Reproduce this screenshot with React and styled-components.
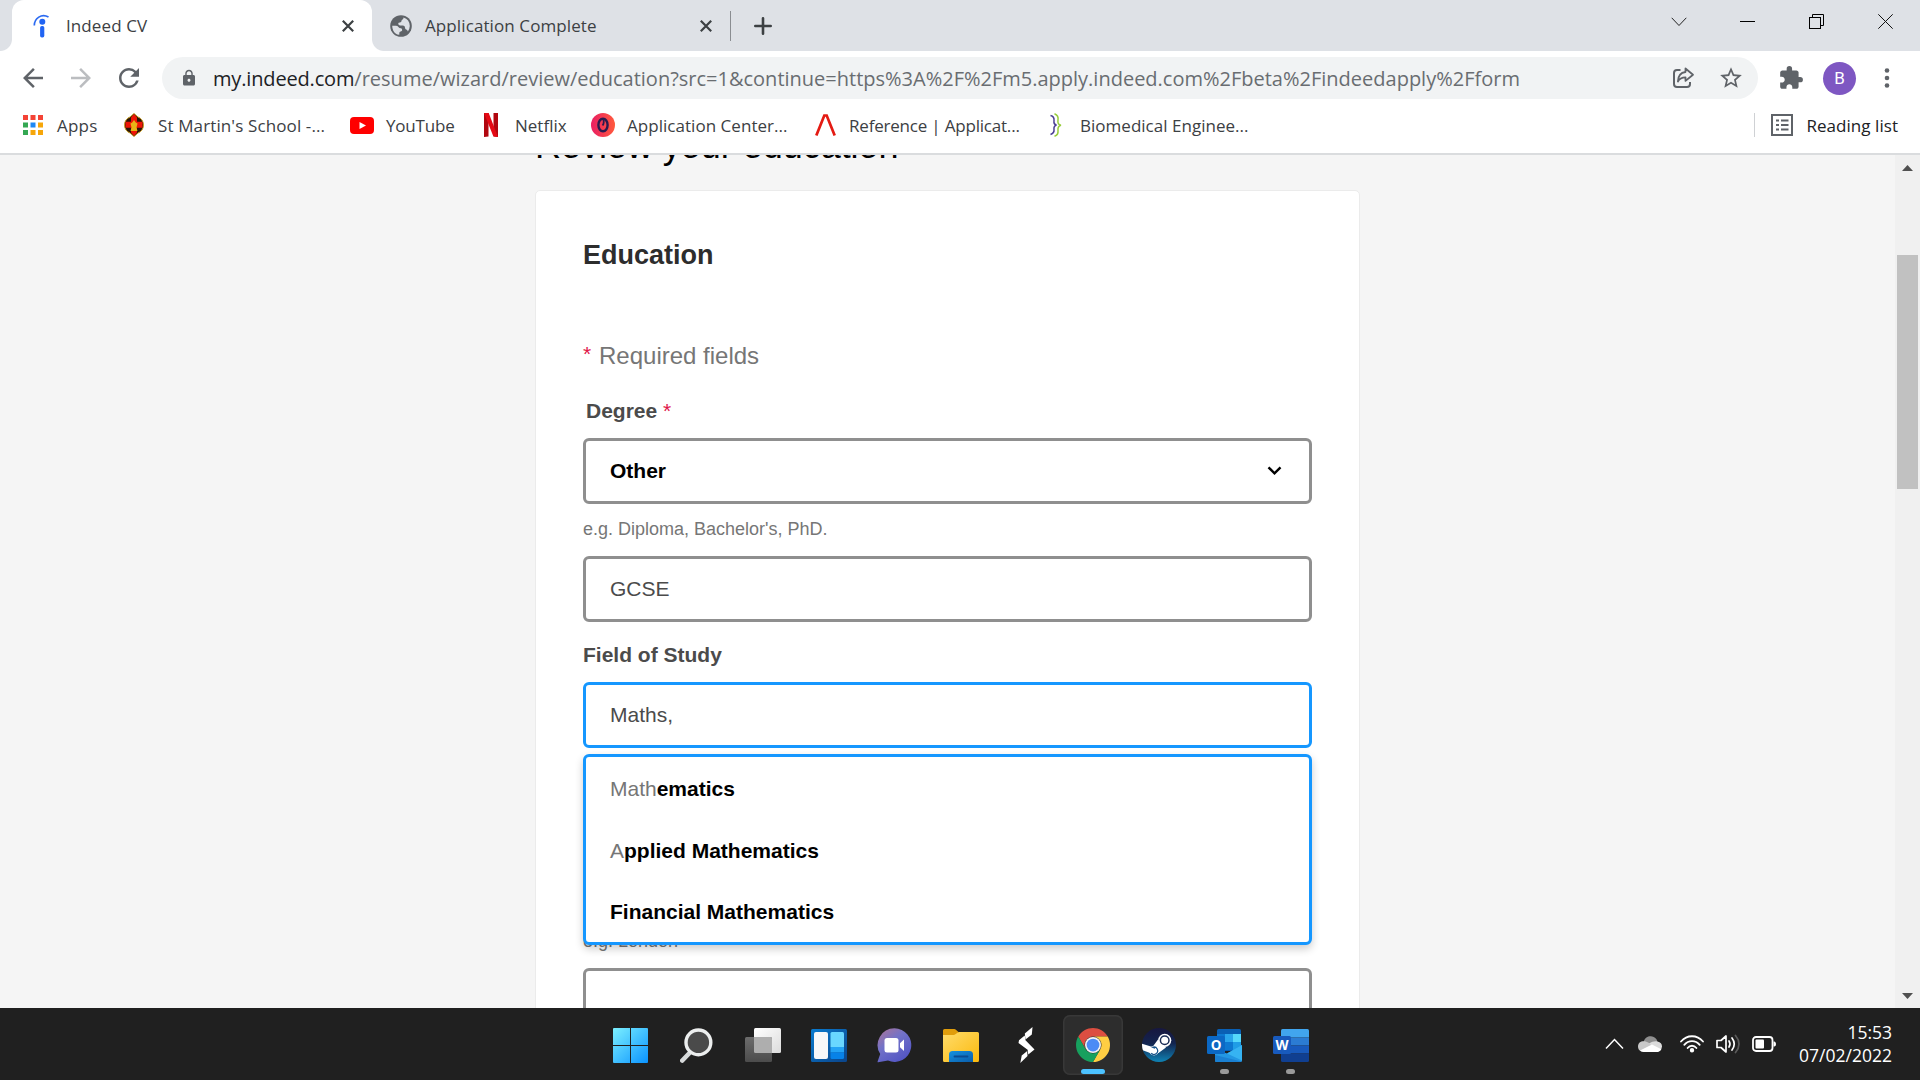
import React from "react";
import styled, { createGlobalStyle, css } from "styled-components";
import { MdArrowBack, MdArrowForward, MdExtension, MdLock, MdRefresh, MdStarBorder } from "react-icons/md";

const GlobalStyle = createGlobalStyle`
  * { box-sizing: border-box; }
  html, body { margin: 0; padding: 0; overflow: hidden; }
  svg { display: block; flex: none; }
`;

const uiFont = css`
  font-family: "Open Sans", "Noto Sans", sans-serif;
`;

const Screen = styled.div`
  display: flex;
  flex-direction: column;
  width: 1920px;
  height: 1080px;
  overflow: hidden;
  background: #fff;
`;

/* ---------- browser chrome ---------- */

const TabStrip = styled.div`
  ${uiFont}
  display: flex;
  height: 51px;
  padding-left: 12px;
  background: #dee1e6;
  color: #3c4043;
  font-size: 17px;
  flex: none;
`;

const Tab = styled.div`
  position: relative;
  display: flex;
  align-items: center;
  width: ${(p) => p.$width}px;
  padding-left: ${(p) => p.$pad}px;
  border-radius: 12px 12px 0 0;
  background: ${(p) => (p.$active ? "#fff" : "transparent")};
  ${(p) =>
    p.$active &&
    css`
      &::before,
      &::after {
        content: "";
        position: absolute;
        bottom: 0;
        width: 12px;
        height: 12px;
      }
      &::before {
        left: -12px;
        background: radial-gradient(circle at 0 0, transparent 11.5px, #fff 12.5px);
      }
      &::after {
        right: -12px;
        background: radial-gradient(circle at 100% 0, transparent 11.5px, #fff 12.5px);
      }
    `}
`;

const TabTitle = styled.span`
  flex: 1;
  margin-left: ${(p) => p.$gap}px;
  letter-spacing: 0.1px;
  white-space: nowrap;
`;

const TabClose = styled.span`
  display: flex;
  margin-right: 18px;
`;

const Divider = styled.div`
  align-self: ${(p) => (p.$top ? "flex-start" : "center")};
  width: 1px;
  height: ${(p) => p.$height}px;
  margin-top: ${(p) => p.$top || 0}px;
  background: ${(p) => p.$color};
`;

const NewTab = styled.div`
  display: flex;
  align-items: center;
  margin-left: 23px;
`;

const WindowButtons = styled.div`
  display: flex;
  height: 43px;
  margin-left: auto;
`;

const WindowButton = styled.div`
  display: flex;
  align-items: center;
  justify-content: center;
  width: 69px;
`;

const Toolbar = styled.div`
  display: flex;
  align-items: center;
  height: 54px;
  padding-left: 9px;
  flex: none;
`;

const NavButton = styled.div`
  display: flex;
  align-items: center;
  justify-content: center;
  width: 48px;
  color: ${(p) => (p.$muted ? "#bbbdc0" : "#5f6368")};
`;

const Omnibox = styled.div`
  ${uiFont}
  display: flex;
  align-items: center;
  width: 1596px;
  height: 42px;
  margin-left: 9px;
  padding: 0 12px 0 18px;
  border-radius: 21px;
  background: #f1f3f4;
  color: #5f6368;
`;

const Url = styled.span`
  flex: 1;
  margin-left: 15px;
  color: #696d71;
  font-size: 20px;
  white-space: nowrap;
`;

const UrlHost = styled.span`
  color: #202124;
  letter-spacing: -0.16px;
`;

const OmniAction = styled.span`
  display: flex;
  justify-content: center;
  width: 30px;
  margin-left: ${(p) => p.$gap || 0}px;
`;

const ToolbarActions = styled.div`
  display: flex;
  align-items: center;
  color: #5f6368;
  margin-left: 20px;
`;

const Avatar = styled.div`
  display: flex;
  align-items: center;
  justify-content: center;
  width: 33px;
  height: 33px;
  margin: 0 20px 0 19px;
  border-radius: 50%;
  background: #7e57c2;
  color: #fff;
  font: 17px "Roboto", sans-serif;
`;

const BookmarkBar = styled.div`
  ${uiFont}
  display: flex;
  align-items: center;
  height: 50px;
  padding: 0 22px 8px 21px;
  border-bottom: 2px solid #dadcde;
  color: #3c4043;
  font-size: 17px;
  flex: none;
`;

const Bookmark = styled.div`
  display: flex;
  align-items: center;
  width: ${(p) => p.$width}px;
  letter-spacing: ${(p) => p.$track}px;
  white-space: nowrap;
`;

const BookmarkIcon = styled.span`
  display: flex;
  justify-content: center;
  width: 24px;
  margin-right: 12px;
`;

const ReadingList = styled.div`
  display: flex;
  align-items: center;
  gap: 13px;
  margin-left: 16px;
  color: #202124;
  letter-spacing: 0.05px;
`;

const Spacer = styled.div`
  flex: 1;
`;

/* ---------- page ---------- */

const Viewport = styled.div`
  display: flex;
  height: 853px;
  background: #f5f5f5;
  font-family: "Liberation Sans", Arial, sans-serif;
  overflow: hidden;
  flex: none;
`;

const Page = styled.main`
  flex: 1;
  padding-left: 535px;
  overflow: hidden;
`;

const PageTitle = styled.h1`
  margin: -31px 0 22px;
  color: #000;
  font-size: 36px;
  font-weight: 400;
  letter-spacing: -0.03px;
  line-height: 44px;
`;

const Card = styled.section`
  display: flex;
  flex-direction: column;
  width: 825px;
  height: 900px;
  padding: 44px 47px 0 47px;
  border: 1px solid #ebebeb;
  border-radius: 5px;
  background: #fff;
`;

const CardTitle = styled.h2`
  margin: 0 0 63px;
  color: #2d2d2d;
  font-size: 27px;
  line-height: 40px;
`;

const Note = styled.p`
  display: flex;
  gap: 7px;
  margin: 0 0 22px;
  color: #767676;
  font-size: 24px;
  line-height: 36px;
`;

const NoteMark = styled.span`
  width: 9px;
  color: #e0164a;
  font-size: 21px;
  line-height: 32px;
`;

const Required = styled.span`
  color: #e0164a;
  font-weight: 400;
`;

const Label = styled.label`
  margin: ${(p) => p.$top || 0}px 0 12px ${(p) => p.$indent || 0}px;
  color: #4b4b4b;
  font-size: 21px;
  font-weight: 700;
  line-height: 30px;
`;

const Hint = styled.p`
  margin: ${(p) => p.$top}px 0 13px;
  color: #767676;
  font-size: 18px;
  line-height: 27px;
`;

const Control = styled.div`
  position: relative;
  display: flex;
  align-items: center;
  justify-content: space-between;
  height: 66px;
  padding: 0 27px 0 24px;
  border: 3px solid ${(p) => (p.$focus ? "#1597ff" : "#8f8f8f")};
  border-radius: 6px;
  background: #fff;
  color: ${(p) => (p.$strong ? "#000" : "#4b4b4b")};
  font-size: 21px;
  font-weight: ${(p) => (p.$strong ? 700 : 400)};
  flex: none;
`;

const Suggestions = styled.ul`
  position: absolute;
  top: 69px;
  left: -3px;
  right: -3px;
  height: 191px;
  margin: 0;
  padding: 1px 0 0;
  border: 3px solid #1597ff;
  border-radius: 6px;
  background: #fff;
  box-shadow: 0 4px 8px rgba(0, 0, 0, 0.2);
  list-style: none;
`;

const Suggestion = styled.li`
  display: flex;
  align-items: center;
  height: 61.5px;
  padding-left: 24px;
  color: #767676;

  &:nth-child(2) {
    padding-top: 1px;
  }
`;

const Rest = styled.b`
  color: #000;
`;

const Scrollbar = styled.div`
  display: flex;
  flex-direction: column;
  align-items: center;
  justify-content: space-between;
  width: 25px;
  padding: 10px 0 9px;
  background: #f0f0f0;
`;

const Thumb = styled.div`
  width: 21px;
  height: 234px;
  margin: 84px 0 auto;
  background: #c1c1c1;
`;

/* ---------- taskbar ---------- */

const Taskbar = styled.footer`
  display: flex;
  height: 72px;
  padding: 0 28px 0 597.500px;
  background: #202020;
  color: #fff;
  flex: none;
`;

const TaskItem = styled.div`
  position: relative;
  display: flex;
  align-items: center;
  justify-content: center;
  width: 60px;
  height: 60px;
  margin: 7px 3px 0;
  border-radius: 7px;
  ${(p) => p.$active && css`
    background: #2d2d2d;
    box-shadow: inset 0 0 0 1.5px #383838;
  `}
  ${(p) => p.$running && css`
    &::after {
      content: "";
      position: absolute;
      bottom: 1px;
      width: ${p.$active ? 24 : 9}px;
      height: 5px;
      border-radius: 3px;
      background: ${p.$active ? "#4cc2ff" : "#9a9a9a"};
    }
  `}
`;

const Tray = styled.div`
  display: flex;
  align-items: center;
  height: 72px;
  margin-left: auto;
`;

const TrayIcon = styled.div`
  margin-right: ${(p) => p.$gap}px;
`;

const Clock = styled.div`
  ${uiFont}
  width: 95px;
  font-size: 17.5px;
  line-height: 23px;
  text-align: right;
  white-space: nowrap;
`;

/* ---------- icons ---------- */

const Cross = () => (
  <svg width="12" height="12" viewBox="0 0 12 12" stroke="#3c4043" strokeWidth="2.2" fill="none">
    <path d="M.8.8l10.400 10.400M11.200.8L.8 11.200" />
  </svg>
);

const IndeedIcon = () => (
  <svg width="17" height="24" viewBox="0 0 17 24">
    <path d="M1.300 11.500C1.300 4.500 8.500-1 15.500 3" fill="none" stroke="#2c6bf2" strokeWidth="1.700" />
    <circle cx="9.300" cy="7.700" r="3" fill="#2164f3" />
    <rect x="7.100" y="12" width="4.200" height="11.500" rx="1.700" fill="#2164f3" />
  </svg>
);

const GlobeIcon = () => (
  <svg width="22" height="22" viewBox="0 0 22 22">
    <circle cx="11" cy="11" r="10.800" fill="#5f6368" />
    <path d="M2.200 10.800h3.600q1.800 0 2.600 1.300.8 1.200 2.400 1.200 1.400.2 1.400 1.700 0 1.400-1.600 1.600-1.300.2-1.300 1.500v1.700Q5 19.400 3.200 15.500 2.200 13.500 2.200 10.800z" fill="#dee1e6" />
    <path d="M13.500 2.600q6 1.900 6.300 8.400-.2 3.300-1.900 5.400-.6-1.600-1.800-1.900-1-.3-1-1.600 0-2.300-2-2.500H9.900q-1.700-.2-1.700-1.600T9.900 7.400q1.600-.1 1.600-1.500 0-1.100 1.100-1.400 1-.4.900-1.900z" fill="#dee1e6" />
  </svg>
);

const ShareIcon = () => (
  <svg width="23" height="22" viewBox="0 0 23 22" fill="none" stroke="#5f6368" strokeWidth="2" strokeLinejoin="round">
    <path d="M8.500 3H5Q2 3 2 6v11q0 3 3 3h10q3 0 3-3v-2" />
    <path d="M13.500 1.500l7.500 6.200-7.500 6.200v-3.600c-3.500 0-6 1-7.600 4.200.2-5.500 3-8.900 7.600-9.500z" strokeWidth="1.800" />
  </svg>
);

const AppsIcon = () => {
  const colors = ["#f44336", "#f44336", "#f44336", "#34a853", "#1e88f5", "#f6a60a", "#34a853", "#f6a60a", "#f6a60a"];
  return (
    <svg width="20" height="20" viewBox="0 0 20 20">
      {colors.map((c, i) => (
        <rect key={i} x={(i % 3) * 7.500} y={Math.floor(i / 3) * 7.500} width="5" height="5" fill={c} />
      ))}
    </svg>
  );
};

const CrestIcon = () => (
  <svg width="20" height="24" viewBox="0 0 20 24">
    <path d="M10 .5l4 3.500c3 1 5.500 4 5.500 8s-2.500 7-5.500 8l-4 3.500L6 20c-3-1-5.500-4-5.500-8S3 5 6 4z" fill="#2b1608" stroke="#c9a227" />
    <path d="M7 4.500L10 1l3 3.500v4.300h5.500v6H13v4.700L10 23l-3-3.500v-4.700H1.500v-6H7z" fill="#ee1506" />
    <path d="M10 7l1.800 2.500 1.700 1-1 4L13.500 18h-7l1-3.500-1-4 1.700-1z" fill="#e7b416" />
  </svg>
);

const YouTubeIcon = () => (
  <svg width="24" height="17" viewBox="0 0 24 17">
    <rect width="24" height="17" rx="4" fill="#f00" />
    <path d="M9.500 5l6.500 3.500-6.500 3.500z" fill="#fff" />
  </svg>
);

const NetflixIcon = () => (
  <svg width="14" height="24" viewBox="0 0 14 24">
    <path d="M0 0h4.500v23.400L0 24zM9.500 0H14v24l-4.500-.6z" fill="#b1060f" />
    <path d="M0 0h4.700L14 24l-4.700-.7z" fill="#e50914" />
  </svg>
);

const OperaIcon = () => (
  <svg width="24" height="24" viewBox="0 0 24 24">
    <defs>
      <linearGradient id="badge"><stop stopColor="#e91e63" /><stop offset="1" stopColor="#ff5a3c" /></linearGradient>
    </defs>
    <circle cx="12" cy="12" r="12" fill="url(#badge)" />
    <ellipse cx="12" cy="12" rx="4.600" ry="6.300" fill="none" stroke="#2b1a4f" strokeWidth="2.400" />
    <path d="M12 5.500q1.800 4-.4 7" fill="none" stroke="#2b1a4f" strokeWidth="1.800" />
  </svg>
);

const CaretIcon = () => (
  <svg width="21" height="22" viewBox="0 0 21 22">
    <path d="M1.300 21.500L9.300 1.500h2.400l8 20" fill="none" stroke="#e41b13" strokeWidth="2.700" />
  </svg>
);

const BraceIcon = () => (
  <svg width="12" height="24" viewBox="0 0 12 24" fill="none" strokeWidth="1.500">
    <path d="M.5 2.500Q4.500 3.500 4 7.500T6.500 12Q3.500 13 4 16.500T.5 21.500" stroke="#4b3f94" />
    <path d="M4.500.8Q8.800 2.500 8 7t3 5.200Q7.500 13 8 17.500T4.500 23.200" stroke="#97cc3a" />
  </svg>
);

const ListIcon = () => (
  <svg width="22" height="22" viewBox="0 0 22 22" stroke="#5f6368" fill="none" strokeWidth="2">
    <rect x="1" y="1" width="20" height="20" />
    <path d="M5 6.500h3M5 11h3M5 15.500h3M10 6.500h7.500M10 11h7.500M10 15.500h7.500" />
  </svg>
);

const StartIcon = () => (
  <svg width="35" height="35" viewBox="0 0 35 35">
    <defs>
      <linearGradient id="start" gradientUnits="userSpaceOnUse" x1="0" y1="0" x2="35" y2="35">
        <stop stopColor="#7cf0ff" /><stop offset="1" stopColor="#0a93ff" />
      </linearGradient>
    </defs>
    <path d="M1 0h16v17H0V1q0-1 1-1zM18 0h16q1 0 1 1v16H18zM0 18h17v17H1q-1 0-1-1zM18 18h17v16q0 1-1 1H18z" fill="url(#start)" />
  </svg>
);

const SearchIcon = () => (
  <svg width="33" height="35" viewBox="0 0 33 35">
    <path d="M10 24.500L2.300 32.500" stroke="#d7dadb" strokeWidth="4.600" strokeLinecap="round" />
    <circle cx="18.400" cy="14.400" r="12.400" fill="#4a4a4a" stroke="#eceeee" strokeWidth="3.400" />
  </svg>
);

const TaskViewIcon = () => (
  <svg width="36" height="34" viewBox="0 0 36 34">
    <defs>
      <linearGradient id="pane" x2="1" y2="1"><stop stopColor="#fff" /><stop offset="1" stopColor="#dcdcdc" /></linearGradient>
      <linearGradient id="shade" x2="0" y2="1"><stop stopColor="#6c6c6c" /><stop offset="1" stopColor="#4c4c4c" /></linearGradient>
    </defs>
    <rect x="9" width="27" height="25" rx="1.500" fill="url(#pane)" />
    <rect y="9" width="27" height="25" rx="1.500" fill="url(#shade)" />
    <path d="M9 9h16.500q1.500 0 1.500 1.500V25H10.500Q9 25 9 23.500z" fill="#aeaeae" />
  </svg>
);

const WidgetsIcon = () => (
  <svg width="36" height="33" viewBox="0 0 36 33">
    <defs>
      <linearGradient id="frame" x2="1" y2="1"><stop stopColor="#0a7bd0" /><stop offset="1" stopColor="#0b4489" /></linearGradient>
    </defs>
    <rect width="36" height="33" rx="1.500" fill="url(#frame)" />
    <rect x="3" y="3" width="14" height="27" rx="2" fill="#f7f7f9" />
    <path d="M19.500 4.500Q19.500 3 21 3h10.500Q33 3 33 4.500V18H19.500z" fill="#69d7ff" />
    <path d="M19.500 18H33v5.500H19.500z" fill="#23a3f5" />
    <path d="M19.500 23.500H33v5q0 1.500-1.500 1.500H21q-1.500 0-1.500-1.500z" fill="#0782e8" />
  </svg>
);

const ChatIcon = () => (
  <svg width="35" height="35" viewBox="0 0 35 35">
    <defs>
      <linearGradient id="chat" x1=".1" x2=".8" y2="1"><stop stopColor="#a9739a" /><stop offset=".4" stopColor="#7272c8" /><stop offset="1" stopColor="#4f52c4" /></linearGradient>
    </defs>
    <path d="M17.500.3a16.800 16.800 0 1 1-6.500 32.300L1.200 34.300Q.3 34.300.6 33.400L3.200 26A16.800 16.800 0 0 1 17.500.3z" fill="url(#chat)" />
    <rect x="7.500" y="10" width="14" height="14.500" rx="2.500" fill="#fff" />
    <path d="M23 15.300l4-3.800v11.500l-4-3.800z" fill="#fff" />
  </svg>
);

const FolderIcon = () => (
  <svg width="36" height="33" viewBox="0 0 36 33">
    <defs>
      <linearGradient id="folder" x2="1" y2="1"><stop stopColor="#ffdc6b" /><stop offset="1" stopColor="#fbb90d" /></linearGradient>
      <linearGradient id="holder" x2="1" y2="1"><stop stopColor="#1592e0" /><stop offset="1" stopColor="#0a5dab" /></linearGradient>
    </defs>
    <path d="M0 1.500Q0 0 1.500 0h9.700q1 0 1.700.7L15.500 3v5H0z" fill="#e09d0c" />
    <path d="M0 6h10.500q1.200 0 2.200-.9l1.500-1.200q1-.9 2.200-.9H34.500Q36 3 36 4.500V31.500q0 1.500-1.500 1.500h-33Q0 33 0 31.500z" fill="url(#folder)" />
    <path d="M6 33v-7.500Q6 22 9.500 22h17q3.500 0 3.500 3.500V33z" fill="url(#holder)" />
    <path d="M11.500 27.500h13" stroke="#0b4b91" strokeWidth="1.800" strokeLinecap="round" />
  </svg>
);

const BoltIcon = () => (
  <svg width="17" height="36" viewBox="0 0 17 36" fill="#fff">
    <path d="M14.500 0L6.800 6.500l.7 6L13.800 7.500z" />
    <path d="M1 13.200L6.700 8.500l.8 4.700 9 9.300-6.200 5-.7-4.700L.5 16z" />
    <path d="M2.300 36L9.500 29l-.3-5L3.700 28.500z" />
  </svg>
);

const ChromeIcon = () => {
  const arm = "M24 12L44.780 12A24 24 0 0 0 3.220 12L13.610 30A12 12 0 0 1 24 12Z";
  return (
    <svg width="34" height="34" viewBox="0 0 48 48">
      <path d={arm} fill="#dc4e41" />
      <path d={arm} fill="#ffce43" transform="rotate(120 24 24)" />
      <path d={arm} fill="#17a05e" transform="rotate(240 24 24)" />
      <circle cx="24" cy="24" r="11.300" fill="#f3f3f3" />
      <circle cx="24" cy="24" r="9" fill="#4b8bf5" />
    </svg>
  );
};

const SteamIcon = () => (
  <svg width="34" height="34" viewBox="0 0 34 34">
    <defs>
      <linearGradient id="steam" x2="0" y2="1"><stop stopColor="#17173f" /><stop offset=".45" stopColor="#13244f" /><stop offset="1" stopColor="#0f83b5" /></linearGradient>
      <clipPath id="disc"><circle cx="17" cy="17" r="17" /></clipPath>
    </defs>
    <g clipPath="url(#disc)">
      <rect width="34" height="34" fill="url(#steam)" />
      <path d="M-1 15.500L10.500 19l5.500-7.500 8 8-7.500 5.500-7 .5L-1 21.500z" fill="#fff" />
      <circle cx="22.700" cy="12.300" r="6.600" fill="#fff" />
      <circle cx="22.700" cy="12.300" r="4.300" fill="#fff" stroke="#1a2c55" strokeWidth="1.500" />
      <circle cx="12" cy="22.700" r="4.800" fill="#fff" />
      <path d="M9.200 25.200a3.700 3.700 0 1 0 1.500-6l2.300 1" fill="none" stroke="#16538a" strokeWidth="1.200" />
    </g>
  </svg>
);

const AppBadge = styled.text`
  font: 700 ${(p) => p.$size}px "Open Sans", sans-serif;
  fill: #fff;
  text-anchor: middle;
`;

const OutlookIcon = () => (
  <svg width="35" height="33" viewBox="0 0 35 33">
    <path d="M10 1.500Q10 0 11.500 0h21Q34 0 34 1.500V22H10z" fill="#0a5fb4" />
    <path d="M10 5h8v8h-8zM18 13h8v8h-8z" fill="#0d78d1" />
    <path d="M18 5h8v8h-8z" fill="#2aa6ec" />
    <path d="M26 5h8v8h-8z" fill="#55d8fb" />
    <path d="M26 13h8v9h-8z" fill="#1f9de6" />
    <path d="M8 20l12 4.500L35 16v15.500q0 1.500-1.500 1.500h-24Q8 33 8 31.500z" fill="#2397e3" />
    <path d="M35 16v15.500L20 24.500z" fill="#36b3f2" />
    <path d="M8 26l26.500 6.500q-.5.500-1 .5h-24Q8 33 8 31.500z" fill="#1a80d2" />
    <rect y="7" width="18" height="18" rx="1.500" fill="#0b68c4" />
    <AppBadge x="9" y="20.800" $size={13.500}>O</AppBadge>
  </svg>
);

const WordIcon = () => (
  <svg width="36" height="33" viewBox="0 0 36 33">
    <path d="M8 1.500Q8 0 9.500 0h25Q36 0 36 1.500V8.500H8z" fill="#41a5ee" />
    <path d="M8 8.500h28v8H8z" fill="#2b7cd3" />
    <path d="M8 16.500h28v8H8z" fill="#185abd" />
    <path d="M8 24.500h28v7q0 1.500-1.500 1.500h-25Q8 33 8 31.500z" fill="#103f91" />
    <rect y="7" width="18" height="18" rx="1.500" fill="#185abd" />
    <AppBadge x="9" y="20.800" $size={13.500}>W</AppBadge>
  </svg>
);

const CloudIcon = () => (
  <svg width="24" height="16" viewBox="0 0 24 16">
    <path d="M5.500 6C7 1 10.500 0 13 .3c3 .3 5.500 2 6.500 5.200L12 11z" fill="#8f8f8f" />
    <path d="M0 10.500C0 7 2.500 5.300 5.500 5.300c2 0 3.500.5 5.500 1.700l4 2.500L3 15.300Q0 14 0 10.500z" fill="#c9c9c9" />
    <path d="M11 7.500c3-2 6-2.500 8.500-2 3 .7 4.500 2.500 4.500 5q0 3-2.500 4.500z" fill="#dcdcdc" />
    <path d="M2 14.500l12-6 9.300 4.700Q22 16 18.500 16h-13Q3.500 16 2 14.500z" fill="#fff" />
  </svg>
);

const WifiIcon = () => (
  <svg width="24" height="18" viewBox="0 0 24 18" fill="none" stroke="#fff" strokeWidth="1.800" strokeLinecap="round">
    <path d="M1 6.500C7-.5 17-.5 23 6.500M4.300 9.800c4.200-5 11.200-5 15.400 0M7.600 13c2.400-3 6.400-3 8.800 0" />
    <circle cx="12" cy="15.300" r="1.300" fill="#fff" />
  </svg>
);

const SpeakerIcon = () => (
  <svg width="25" height="20" viewBox="0 0 25 20" fill="none" stroke="#fff" strokeWidth="1.700" strokeLinejoin="round" strokeLinecap="round">
    <path d="M1 6.500h4L10 2v16l-5-4.500H1z" />
    <path d="M13 7q2 3 0 6M16 4q4.500 6 0 12" />
    <path d="M19.500 1.500q7 8.500 0 17" stroke="#5a5a5a" />
  </svg>
);

const BatteryIcon = () => (
  <svg width="24" height="16" viewBox="0 0 24 16">
    <rect x="1" y="1" width="19.500" height="14" rx="3" fill="none" stroke="#fff" strokeWidth="1.800" />
    <rect x="3.500" y="3.500" width="8.500" height="9" rx="1" fill="#fff" />
    <path d="M21.500 5.500h1Q24 6 24 8t-1.500 2.500h-1z" fill="#fff" />
  </svg>
);

const bookmarks = [
  { title: "Apps", icon: <AppsIcon />, width: 101, track: 0.2 },
  { title: "St Martin's School -...", icon: <CrestIcon />, width: 228, track: 0.12 },
  { title: "YouTube", icon: <YouTubeIcon />, width: 129, track: -0.2 },
  { title: "Netflix", icon: <NetflixIcon />, width: 112, track: 0 },
  { title: "Application Center...", icon: <OperaIcon />, width: 222, track: 0.04 },
  { title: "Reference | Applicat...", icon: <CaretIcon />, width: 231, track: -0.2 },
  { title: "Biomedical Enginee...", icon: <BraceIcon />, width: 210, track: 0.02 },
];

const suggestions = [
  { typed: "Math", rest: "ematics" },
  { typed: "A", rest: "pplied Mathematics" },
  { typed: "", rest: "Financial Mathematics" },
];

const tasks = [
  { id: "start", icon: <StartIcon /> },
  { id: "search", icon: <SearchIcon /> },
  { id: "views", icon: <TaskViewIcon /> },
  { id: "widgets", icon: <WidgetsIcon /> },
  { id: "chat", icon: <ChatIcon /> },
  { id: "files", icon: <FolderIcon /> },
  { id: "bolt", icon: <BoltIcon /> },
  { id: "chrome", icon: <ChromeIcon />, active: true, running: true },
  { id: "steam", icon: <SteamIcon /> },
  { id: "outlook", icon: <OutlookIcon />, running: true },
  { id: "word", icon: <WordIcon />, running: true },
];

export default function App() {
  return (
    <Screen>
      <GlobalStyle />
      <TabStrip>
        <Tab $active $width={360} $pad={21}>
          <IndeedIcon />
          <TabTitle $gap={16}>Indeed CV</TabTitle>
          <TabClose><Cross /></TabClose>
        </Tab>
        <Tab $width={358} $pad={18}>
          <GlobeIcon />
          <TabTitle $gap={13}>Application Complete</TabTitle>
          <TabClose><Cross /></TabClose>
        </Tab>
        <Divider $height={30} $top={11} $color="#8a8d91" />
        <NewTab>
          <svg width="18" height="18" viewBox="0 0 18 18" stroke="#3c4043" strokeWidth="2.6" strokeLinecap="round">
            <path d="M9 1.300v15.400M1.300 9h15.400" />
          </svg>
        </NewTab>
        <WindowButtons>
          <WindowButton>
            <svg width="16" height="10" viewBox="0 0 16 10" fill="none" stroke="#222"><path d="M.7.8L8 8.500 15.300.8" /></svg>
          </WindowButton>
          <WindowButton>
            <svg width="15" height="1" viewBox="0 0 15 1"><rect width="15" height="1" fill="#000" /></svg>
          </WindowButton>
          <WindowButton>
            <svg width="15" height="15" viewBox="0 0 15 15" fill="none" stroke="#000">
              <rect x=".5" y="3.500" width="11" height="11" /><path d="M3.500 3.500v-3h11v11h-3" />
            </svg>
          </WindowButton>
          <WindowButton>
            <svg width="15" height="15" viewBox="0 0 15 15" stroke="#111"><path d="M.3.3l14.400 14.400M14.700.3L.3 14.700" /></svg>
          </WindowButton>
        </WindowButtons>
      </TabStrip>

      <Toolbar>
        <NavButton><svg width="20" height="20" viewBox="4 4 16 16" fill="currentColor"><MdArrowBack size={24} /></svg></NavButton>
        <NavButton $muted><svg width="20" height="20" viewBox="4 4 16 16" fill="currentColor"><MdArrowForward size={24} /></svg></NavButton>
        <NavButton><MdRefresh size={30} /></NavButton>
        <Omnibox>
          <MdLock size={18} />
          <Url>
            <UrlHost>my.indeed.com</UrlHost>
            /resume/wizard/review/education?src=1&amp;continue=https%3A%2F%2Fm5.apply.indeed.com%2Fbeta%2Findeedapply%2Fform
          </Url>
          <OmniAction><ShareIcon /></OmniAction>
          <OmniAction $gap={18}><MdStarBorder size={26} /></OmniAction>
        </Omnibox>
        <ToolbarActions>
          <MdExtension size={26} />
          <Avatar>B</Avatar>
          <svg width="22" height="20" viewBox="0 0 22 20" fill="#5f6368">
            <circle cx="11" cy="2.500" r="2.300" /><circle cx="11" cy="10" r="2.300" /><circle cx="11" cy="17.500" r="2.300" />
          </svg>
        </ToolbarActions>
      </Toolbar>

      <BookmarkBar>
        {bookmarks.map((b) => (
          <Bookmark key={b.title} $width={b.width} $track={b.track}>
            <BookmarkIcon>{b.icon}</BookmarkIcon>
            {b.title}
          </Bookmark>
        ))}
        <Spacer />
        <Divider $height={24} $color="#cfd1d4" />
        <ReadingList>
          <ListIcon />
          Reading list
        </ReadingList>
      </BookmarkBar>

      <Viewport>
        <Page>
          <PageTitle>Review your education</PageTitle>
          <Card>
            <CardTitle>Education</CardTitle>
            <Note><NoteMark>*</NoteMark>Required fields</Note>
            <Label $indent={3}>Degree <Required>*</Required></Label>
            <Control $strong>
              Other
              <svg width="15" height="10" viewBox="0 0 15 10" fill="none" stroke="#000" strokeWidth="2.400"><path d="M1.500 1.300l6 6 6-6" /></svg>
            </Control>
            <Hint $top={12}>e.g. Diploma, Bachelor's, PhD.</Hint>
            <Control>GCSE</Control>
            <Label $top={18}>Field of Study</Label>
            <Control $focus>
              Maths,
              <Suggestions>
                {suggestions.map((s) => (
                  <Suggestion key={s.rest}>{s.typed}<Rest>{s.rest}</Rest></Suggestion>
                ))}
              </Suggestions>
            </Control>
            <Hint $top={180}>e.g. London</Hint>
            <Control />
          </Card>
        </Page>
        <Scrollbar>
          <svg width="11" height="6" viewBox="0 0 11 6" fill="#505050"><path d="M5.500 0L11 6H0z" /></svg>
          <Thumb />
          <svg width="11" height="6" viewBox="0 0 11 6" fill="#505050"><path d="M0 0h11L5.500 6z" /></svg>
        </Scrollbar>
      </Viewport>

      <Taskbar>
        {tasks.map((t) => (
          <TaskItem key={t.id} $active={t.active} $running={t.running}>{t.icon}</TaskItem>
        ))}
        <Tray>
          <TrayIcon $gap={14}>
            <svg width="19" height="12" viewBox="0 0 19 12" fill="none" stroke="#fff" strokeWidth="1.500"><path d="M1 10.500l8.500-9 8.500 9" /></svg>
          </TrayIcon>
          <TrayIcon $gap={18}><CloudIcon /></TrayIcon>
          <TrayIcon $gap={12}><WifiIcon /></TrayIcon>
          <TrayIcon $gap={11}><SpeakerIcon /></TrayIcon>
          <TrayIcon $gap={21}><BatteryIcon /></TrayIcon>
          <Clock>15:53<br />07/02/2022</Clock>
        </Tray>
      </Taskbar>
    </Screen>
  );
}
